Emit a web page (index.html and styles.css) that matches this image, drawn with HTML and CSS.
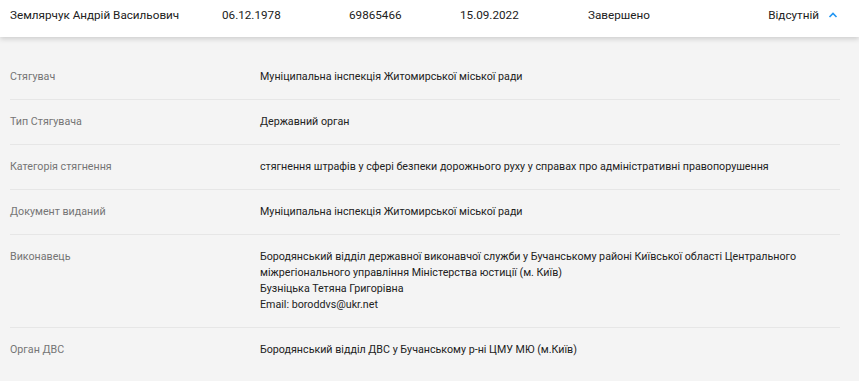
FILE: index.html
```html
<!DOCTYPE html>
<html lang="uk">
<head>
  <meta charset="UTF-8" />
  <meta name="viewport" content="width=device-width, initial-scale=1.0"/>
  <title>Виконавче провадження</title>
  <link rel="stylesheet" href="styles.css">
</head>
<body>

<div class="case">
  <div class="case-head">
    <span>Землярчук Андрій Васильович</span>
    <span>06.12.1978</span>
    <span>69865466</span>
    <span>15.09.2022</span>
    <span>Завершено</span>
    <span class="case-state">
      Відсутній
      <svg class="chevron" width="12" height="12" viewBox="0 0 12 12">
        <path d="M2.5 8 L6 4.5 L9.5 8" fill="none" stroke="#2196f3" stroke-width="1.6"/>
      </svg>
    </span>
  </div>

  <div class="case-body">
    <div class="row">
      <div class="label">Стягувач</div>
      <div class="value">Муніципальна інспекція Житомирської міської ради</div>
    </div>
    <div class="row">
      <div class="label">Тип Стягувача</div>
      <div class="value">Державний орган</div>
    </div>
    <div class="row">
      <div class="label">Категорія стягнення</div>
      <div class="value">стягнення штрафів у сфері безпеки дорожнього руху у справах про адміністративні правопорушення</div>
    </div>
    <div class="row">
      <div class="label">Документ виданий</div>
      <div class="value">Муніципальна інспекція Житомирської міської ради</div>
    </div>
    <div class="row">
      <div class="label">Виконавець</div>
      <div class="value">
        Бородянський відділ державної виконавчої служби у Бучанському районі Київської області Центрального міжрегіонального управління Міністерства юстиції (м. Київ)<br>
        Бузніцька Тетяна Григорівна<br>
        Email: boroddvs@ukr.net
      </div>
    </div>
    <div class="row">
      <div class="label">Орган ДВС</div>
      <div class="value">Бородянський відділ ДВС у Бучанському р-ні ЦМУ МЮ (м.Київ)</div>
    </div>
  </div>
</div>

</body>
</html>
```

FILE: styles.css
```css
body {
  font-family: Roboto, 'Noto Sans', sans-serif;
  background: #f4f4f4;
  color: #212121;
  margin: 0;
  padding: 0;
}

.case-head {
  position: relative;
  z-index: 1;
  display: grid;
  grid-template-columns: 212px 127px 111px 128px 1fr auto;
  align-items: center;
  height: 30px;
  padding: 8px 20px 7px 10px;
  margin-top: -8px;
  background: #fff;
  font-size: 11.7px;
  box-shadow: 0 2px 5px rgba(0,0,0,0.16);
}

.case-state {
  display: flex;
  align-items: center;
  gap: 8px;
}

.chevron {
  display: block;
}

.case-body {
  padding: 18px 19px 8px 10px;
}

.row {
  display: flex;
  padding: 14px 0;
  border-bottom: 1px solid #e6e6e6;
  font-size: 10.7px;
  line-height: 16px;
}

.row:last-child {
  border-bottom: none;
}

.label {
  width: 250px;
  flex-shrink: 0;
  color: #757575;
}

.value {
  flex: 1;
  color: #222;
}
```
